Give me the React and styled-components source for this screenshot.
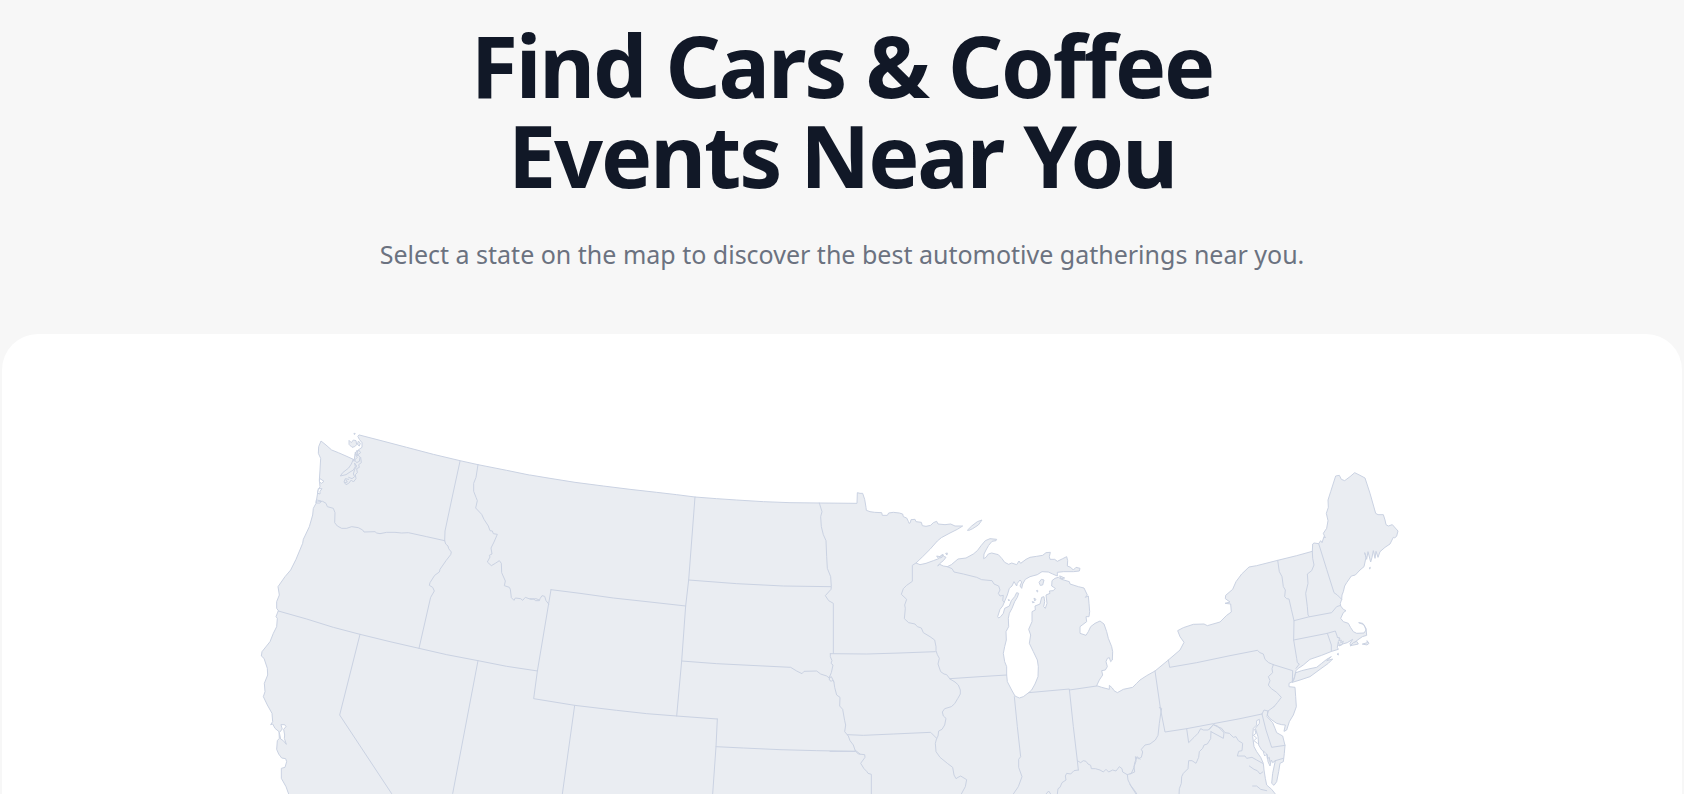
import React from "react";
import styled, { createGlobalStyle } from "styled-components";

const GlobalStyle = createGlobalStyle`
  *, *::before, *::after { box-sizing: border-box; }
  body {
    margin: 0;
    background: #f7f7f7;
    font-family: "Segoe UI", "Noto Sans", "Open Sans", sans-serif;
  }
`;

const Page = styled.main`
  display: flex;
  flex-direction: column;
  min-height: 100vh;
  padding: 20px 2px 0;
  overflow: hidden;
`;

const Hero = styled.header`
  display: flex;
  flex-direction: column;
  align-items: center;
  gap: 40px;
  padding-bottom: 66px;
  text-align: center;
`;

const Title = styled.h1`
  margin: 0;
  color: #111827;
  font-size: 86px;
  font-weight: 700;
  line-height: 90px;
  letter-spacing: -0.025em;
`;

const Subtitle = styled.p`
  margin: 0;
  color: #6b7280;
  font-size: 25px;
  line-height: 28px;
`;

const MapCard = styled.section`
  flex: 1;
  background: #ffffff;
  border-radius: 36px 36px 0 0;
  overflow: hidden;
`;

const MapSvg = styled.svg`
  display: block;
  width: 100%;
  height: auto;
  stroke-linejoin: round;
  stroke-linecap: round;

  path {
    vector-effect: non-scaling-stroke;
  }
`;

const Land = styled.path`
  fill: #eaedf2;
  stroke: #cad2e2;
  stroke-width: 1px;
`;

const Water = styled.path`
  fill: #ffffff;
  stroke: #cad2e2;
  stroke-width: 1px;
`;

const Border = styled.path`
  fill: none;
  stroke: #cad2e2;
  stroke-width: 1px;
`;

/* The map is drawn in four regions, each with its own origin. */
const ORIGIN = {
  west: [0, 0],
  plains: [870, 90],
  lakes: [1800, 180],
  east: [2670, 90],
};

const place = (region, points) => {
  const [dx, dy] = ORIGIN[region];
  return points
    .trim()
    .split(/\s+/)
    .map((pair) => {
      const [x, y] = pair.split(",").map(Number);
      return `${x + dx} ${y + dy}`;
    })
    .join("L");
};

const line = (region, points) => `M${place(region, points)}`;
const shape = (region, points) => `${line(region, points)}Z`;

const mainland = [
  ["west", "358,45 420,61 500,82 580,103 660,122 714,134 800,151 868,165"],
  ["plains", "0,75 60,85 135,97 220,108 300,118 380,127 440,134 495,141 560,146 620,150 700,155 780,158 870,159 981,160"],
  ["lakes", `52,38 60,40 68,40 74,58 78,82 79,91 90,95 104,97 125,98 127,106 142,106 146,99 160,97 178,99 188,102 190,110 200,114
    205,124 207,130 211,128 213,119 225,118 228,125 244,127 247,137 258,139 272,136 280,128 290,124 294,132 315,134 332,132
    345,138 368,138 352,148 330,159 304,173 292,183 270,208 248,230 228,249 240,254 258,250 280,242 296,236 290,228 300,230
    308,222 311,229 318,232 310,242 300,250 293,258 299,253 310,258 322,260 334,254 354,237 378,234 400,222 412,212 424,196
    436,182 450,176 470,178 468,182 456,184 446,196 438,210 432,222 431,236 438,232 445,222 455,219 475,224 486,236 494,247
    506,253 515,249 530,254 537,243 542,250 558,238 570,232 590,229 608,226 618,218 631,217 628,230 630,238 644,238 652,244
    668,236 680,230 683,242 682,258 692,262 700,270 708,262 720,265 718,273 700,275 670,275 652,277 652,288 638,282 625,276
    606,275 592,284 570,290 556,298 548,312 545,325 540,318 545,306 540,300 532,310 530,318 522,305 516,318 508,325 502,345
    493,366 488,378 480,388 473,410 476,414 482,410 490,400 494,385 508,378 514,362 524,350 530,338 536,340 532,352 524,365
    516,385 508,400 505,415 506,440 498,455 499,480 494,500 490,520 494,545 500,560 500,585 502,605 515,630 525,648 538,654
    550,650 566,638 575,630 585,612 594,590 595,560 592,540 580,515 568,490 572,465 566,448 576,425 576,395 586,390 585,378
    600,372 605,352 612,350 614,365 611,380 616,385 621,370 618,345 630,340 628,333 640,332 646,325 635,318 636,302 645,295
    655,292 665,298 688,305 690,312 715,320 732,324 742,345 736,352 745,348 747,370 749,395 747,410 738,410 740,425 720,440
    720,460 738,466 745,455 752,440 765,430 780,423 792,432 800,455 805,475 815,500 818,515 817,540 812,545 808,533 802,535
    798,545 802,560 796,570 785,572 788,585 778,600 770,617 785,622 808,628 808,616 817,624 822,632 832,638 850,628 878,622
    890,610`],
  ["east", `30,690 50,677 75,663 115,630 150,600 162,577 150,560 143,542 160,533 190,523 222,522 232,527 270,516 290,496 304,486
    302,462 285,460 300,456 286,446 287,436 308,418 318,395 335,372 357,351 380,347 443,331 500,317 547,304 548,282 552,279
    566,281 572,272 576,278 582,260 586,264 580,250 590,235 594,212 589,190 595,172 594,150 602,125 617,78 628,76 634,88
    644,92 660,80 674,68 690,76 705,84 720,130 737,190 744,194 760,194 765,210 768,224 775,228 787,224 804,243 800,258 794,264
    790,262 780,282 765,292 750,305 744,322 738,304 735,325 730,302 726,322 722,336 714,305 710,328 704,308 708,322 702,350 690,360
    676,375 664,378 650,398 644,408 640,425 636,435 635,448 631,460 632,468 640,478 648,482 640,488 632,505 640,515 655,520
    662,533 670,545 680,550 702,549 708,540 702,524 686,518 698,520 708,535 710,556 697,560 680,572 662,588 660,580 668,568
    652,578 638,582 628,588 625,575 622,592 625,598 605,604 575,616 540,628 520,645 505,655 498,662 494,680 487,695 477,700
    477,710 495,712 497,740 499,770 490,795 478,815 470,840 462,844 466,825 455,824 440,820 420,806 412,795 414,783 411,800
    428,818 435,835 440,848 458,858 465,886 463,910 460,935 450,940 446,965 440,995 432,1006 425,1000 428,970 436,932 428,938
    424,930 420,948 414,935 412,915 406,908 395,900 386,885 384,860 376,835 388,820 388,808 380,812 380,825 370,835 368,860
    372,890 380,905 392,922 400,940 402,960 406,985 410,1005 425,1018 436,1032 440,1060`],
  ["west", `160,1150 146,1122 138,1100 124,1075 124,1045 135,1042 140,1025 137,1016 125,1014 116,1002 110,988 112,962 118,955
    117,935 105,925 98,912 92,914 98,905 96,880 82,855 70,830 75,815 73,790 83,765 82,745 72,715 64,708 66,695 90,665
    100,640 110,620 112,595 108,590 115,572 110,565 110,545 118,525 114,500 135,470 152,450 168,418 188,370 190,358
    208,320 218,285 220,265 228,250 230,237 234,212 240,200 238,180 240,150 242,115 235,100 236,80 243,63 258,75 275,90
    295,98 318,108 340,118 342,124 346,96 352,108 352,92 366,82 366,68 358,58 354,50`],
];

const mainlandPath = `M${mainland.map(([region, points]) => place(region, points)).join("L")}Z`;

const islands = [
  shape("lakes", "383,150 395,138 412,125 426,120 415,135 398,146 387,151"),
  shape("lakes", "598,306 604,298 612,300 608,315 602,316"),
  shape("lakes", "590,332 593,331 593,335"),
  shape("lakes", "583,355 588,358 585,362"),
  shape("lakes", "578,365 583,367 579,368"),
  shape("lakes", "506,359 509,360 507,362"),
  shape("lakes", "660,288 674,294 664,296"),
  shape("lakes", "302,228 308,226 306,232 300,234"),
  shape("lakes", "318,220 322,219 321,224"),
  shape("east", `498,668 515,662 540,656 560,652 575,640 590,628 604,620 590,632 608,627 595,640 570,658 540,680 510,690 487,697
    492,688`),
  shape("east", "662,586 670,578 680,574 685,582 676,584"),
  shape("east", "698,582 712,578 711,572 717,580 712,584"),
  shape("east", "622,612 625,610 625,614"),
  shape("east", "718,354 721,352 720,356"),
  shape("west", "343,40 346,41 344,43"),
  shape("west", "328,62 334,68 340,60 348,62 350,74 344,80 336,82 328,74"),
  shape("west", "356,64 361,70 358,78 353,74"),
];

const inlets = [
  shape("west", "124,914 134,914 138,920 131,928 134,945 133,955 139,973 130,962 122,957 118,938 126,928"),
  shape("west", "240,176 252,184 244,190 239,186"),
  shape("west", "236,206 246,206 240,214 240,222 234,220"),
  shape("west", "230,240 244,243 240,249 230,249"),
];

const sound = [
  line("west", "340,118 334,132 326,144 308,158 301,168 318,164 330,156 340,150 346,140 344,130"),
  line("west", "350,92 346,104 352,112 344,120 350,128 358,124 360,112 354,104 362,98 356,90 352,96"),
  line("west", "362,112 364,128 356,134 358,142 350,146 352,158 346,164 348,176 340,186 334,180 326,190 318,194 312,186 316,176 326,178"),
  line("west", "344,130 350,138 344,148 340,162 344,170 336,176 326,172"),
  line("west", "318,180 322,186 316,188"),
];

const borders = [
  /* Pacific Northwest and Great Basin */
  line("west", "660,124 638,225 615,333 614,362"),
  line("west", `228,246 248,244 258,250 262,260 280,265 285,278 284,308 292,318 305,325 320,325 335,320 355,323 368,330 372,336
    405,335 410,339 420,341 440,337 465,337 485,339 505,338 560,350 614,362`),
  line("west", `614,362 617,372 624,378 626,386 634,396 632,404 618,422 600,448 598,456 584,466 570,488 568,496 578,502 583,513
    572,532 570,540 537,685`),
  line("west", "115,573 200,597 280,622 360,643 450,665 537,685 620,704 714,722 800,739 893,753"),
  line("west", "360,643 299,885 455,1121 474,1150"),
  line("west", "714,722 638,1121 632,1150"),
  line("west", `714,134 708,172 701,190 701,214 708,232 712,242 707,264 725,283 732,298 745,318 750,332 757,333 760,341 772,343
    762,366 753,384 756,402 748,406 750,411 742,426 754,437 766,430 778,422 784,430 785,458 796,483 793,497 808,502 811,508
    814,533 822,541 826,534 842,536 848,541 856,532 872,538 888,536 898,540`),
  line("plains", "0,446 12,447 16,452 28,452 30,446 36,437 44,439 48,452 56,462"),

  /* Mountain states */
  line("plains", "63,419 22,664 11,746 134,766 260,781 350,791 440,798 562,807"),
  line("plains", "63,419 150,430 250,444 360,456 467,468"),
  line("plains", "495,141 476,390 467,468 455,633 440,798"),
  line("plains", "134,766 97,1032 94,1060"),
  line("plains", "562,807 558,890 548,1032 547,1060"),

  /* Great Plains */
  line("plains", "476,390 620,401 760,408 902,410"),
  line("plains", "455,633 560,641 660,646 782,652 800,663 816,671 822,664 860,663 872,672 890,678 898,684"),
  line("plains", "558,890 640,894 750,899 860,902 975,904"),
  line("plains", `868,159 876,185 872,200 874,230 880,254 888,272 890,320 892,355 902,380 904,410 903,418 886,437 896,452 910,460
    910,610`),
  line("plains", `901,611 901,620 906,632 903,640 909,645 904,668 898,682 898,690 904,694 908,690 912,698 914,712 920,735 930,742
    929,768 938,778 944,812 947,825 944,845 955,858 960,872 970,885 975,900 990,912`),
  line("plains", "898,684 904,680 912,696"),
  line("lakes", "-29,521 80,522 180,519 286,515"),
  line("lakes", "22,764 70,766 160,762 272,757 290,775"),
  line("lakes", "45,814 -30,814"),
  line("lakes", "45,812 55,822 74,824 75,832 62,850 72,866 80,874 84,880 94,883 94,970"),

  /* Upper Mississippi and Great Lakes */
  line("lakes", `228,249 217,256 217,304 200,316 190,326 184,343 200,358 194,375 196,385 193,416 206,428 225,432 232,440 244,444
    250,458 270,470 284,480 288,500 288,512 292,524 298,535 294,552 302,575 312,582 320,584 330,597`),
  line("lakes", "330,596 420,590 500,585"),
  line("lakes", `330,597 345,606 355,615 361,630 361,642 353,656 344,671 334,680 314,686 307,696 310,708 318,715 314,735 306,748
    296,753 294,768 290,775 286,790 288,815 300,832 322,850 338,862 342,885 348,896 354,892 362,888 380,899 376,920 364,942
    358,970`),
  line("lakes", "322,260 336,266 342,276 370,282 410,292 425,299 456,302 462,312 476,318 480,330 475,340 480,348 490,346 488,362 493,366"),
  line("lakes", "523,650 532,740 542,830 536,838 536,862 546,890 535,920 520,942 510,970"),
  line("lakes", "566,638 688,627 700,740 712,842 715,870"),
  line("lakes", "688,630 770,618"),

  /* Ohio River */
  line("lakes", `715,870 702,872 692,882 680,880 676,888 678,900 666,908 660,922 654,926 652,942 644,970`),
  line("lakes", `712,842 722,848 730,842 738,844 744,852 752,856 754,866 766,866 780,870 790,876 798,868 806,876 818,870 828,873
    838,860 846,866 848,876 862,884 874,880 882,862 884,848 892,830 900,838`),
  line("lakes", "862,884 864,900 872,916 884,932 896,950 910,970"),
  line("lakes", "618,942 626,933 632,942"),
  line("east", `88,773 95,775 92,792 88,820 84,856 76,870 60,882 45,885 34,898 38,906 34,922 26,926 16,920 18,934 12,950 14,966
    0,972`),
  line("east", "0,1004 18,1032 30,1060"),

  /* Mid-Atlantic */
  line("east", "75,663 92,780 105,846 170,836 250,821 330,806 396,792"),
  line("east", `170,836 176,878 192,862 204,850 212,836 220,840 235,840 250,824 262,830 275,835 285,848 298,850 310,862 318,860
    325,872 338,880 336,902 326,904 322,918 345,918 350,925 366,922 380,930 398,940`),
  line("east", `243,845 242,866 232,882 222,885 218,895 208,905 206,922 198,940 186,932 176,932 174,956 160,970 155,980 154,1000
    148,1016 146,1060`),
  line("east", "243,845 280,865 282,848 262,828 250,824 238,838"),
  line("east", "396,792 408,840 425,892 465,886"),
  line("east", "396,792 402,780 414,783 432,770"),
  line("east", "436,932 460,925"),
  line("east", "115,630 119,652 200,638 300,617 382,601 390,608 400,612 405,628 416,638 430,644"),
  line("east", "430,644 426,656 428,668 415,680 420,692 415,705 424,716 440,727 454,742 442,758 432,770"),
  line("east", "430,644 488,662 487,697"),
  line("east", "358,948 372,958 382,962 390,972 398,966"),
  line("east", "368,1008 380,1008 392,1018 410,1022"),
  line("east", "374,838 378,850 370,856 380,864 372,872 382,880"),
  line("east", "400,905 404,918 410,912 412,926 418,922 420,936"),

  /* New England */
  line("east", "443,331 448,365 456,380 460,410 466,420 464,440 470,446 477,447 484,478 492,512 491,570 500,625 502,638 508,642 498,655"),
  line("east", "547,304 548,325 552,345 545,362 532,372 534,400 527,430 532,470 534,495 538,500"),
  line("east", "492,512 535,501 605,488 620,470 632,466"),
  line("east", "566,281 590,358 612,428 622,435 635,448"),
  line("east", "491,570 592,550 616,543 622,560 628,566"),
  line("east", "592,550 604,585 604,604"),
  line("east", "622,562 630,564 626,572 634,570 632,578 640,574 636,584 626,586"),
];

function StateMap() {
  return (
    <MapSvg viewBox="-714 -258 5040 1380" role="img" aria-label="Map of the United States">
      <Land d={mainlandPath} />
      <Land d={islands.join("")} />
      <Water d={inlets.join("")} />
      <Border d={borders.join("")} />
      <Border d={sound.join("")} />
    </MapSvg>
  );
}

export default function App() {
  return (
    <>
      <GlobalStyle />
      <Page>
        <Hero>
          <Title>
            Find Cars &amp; Coffee
            <br />
            Events Near You
          </Title>
          <Subtitle>Select a state on the map to discover the best automotive gatherings near you.</Subtitle>
        </Hero>
        <MapCard>
          <StateMap />
        </MapCard>
      </Page>
    </>
  );
}
